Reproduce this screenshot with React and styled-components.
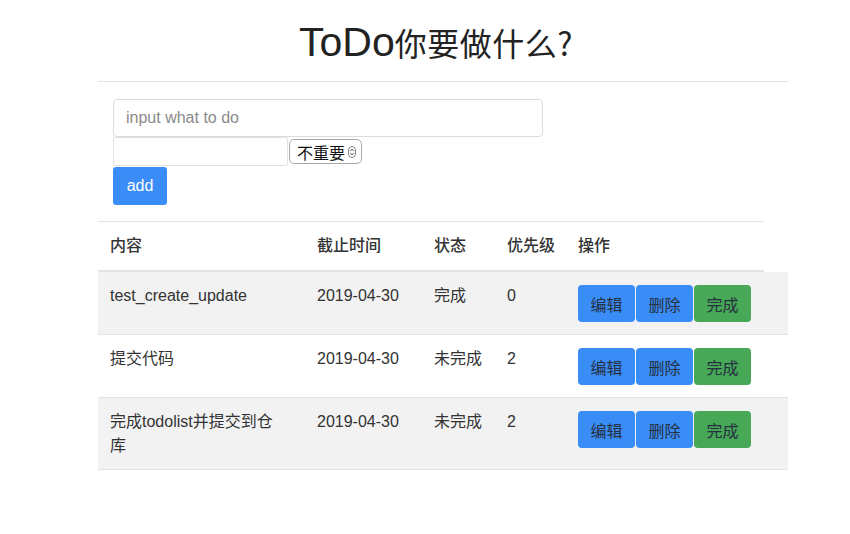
import React from 'react';
import styled, { createGlobalStyle } from 'styled-components';

const colors = {
    text: '#333',
    line: '#e3e3e3',
    stripe: '#f2f2f2',
    blue: '#3a8cf7',
    green: '#47a857',
};

const GlobalStyle = createGlobalStyle`
    body {
        margin: 0;
        background: #fff;
        font-family: "Liberation Sans", "Noto Sans CJK SC", sans-serif;
        color: ${colors.text};
    }
`

const Page = styled.div`
    width: 690px;
    margin-left: 98px;
    display: flex;
    flex-direction: column;
`

const Header = styled.div`
    height: 81px;
    border-bottom: 1px solid ${colors.line};
    display: flex;
    justify-content: center;
    align-items: flex-start;
`

const Title = styled.h1`
    margin: 17px 0 0 -14px;
    font-size: 41px;
    font-weight: normal;
    line-height: 50px;
    color: #222;
`

const TitleCjk = styled.span`
    font-size: 32px;
    font-family: "Noto Sans CJK SC", sans-serif;
    letter-spacing: 0.5px;
`

const Form = styled.div`
    padding: 17px 0 0 15px;
    display: flex;
    flex-direction: column;
    align-items: flex-start;
`

const TextInput = styled.input`
    box-sizing: border-box;
    width: 430px;
    height: 38px;
    padding: 0 12px;
    border: 1px solid #dcdcdc;
    border-radius: 4px;
    font-family: "Liberation Sans", sans-serif;
    font-size: 16px;
    outline: none;
    &::placeholder {
        color: #8a8a8a;
    }
`

const Row = styled.div`
    display: flex;
    align-items: center;
`

const DateInput = styled.input`
    box-sizing: border-box;
    width: 175px;
    height: 29px;
    border: 1px solid #e2e2e2;
    border-radius: 2px;
    outline: none;
`

const SelectBox = styled.div`
    box-sizing: border-box;
    width: 73px;
    height: 25px;
    margin-left: 1px;
    padding: 0 5px 0 7px;
    border: 1px solid #a9a9a9;
    border-radius: 5px;
    display: flex;
    align-items: center;
    justify-content: space-between;
    font-family: "Noto Sans CJK SC", sans-serif;
    font-size: 16px;
    color: #111;
`

const AddButton = styled.button`
    box-sizing: border-box;
    width: 54px;
    height: 38px;
    margin-top: 1px;
    border: none;
    border-radius: 3px;
    background: ${colors.blue};
    color: #fff;
    font-family: "Liberation Sans", sans-serif;
    font-size: 16px;
`

const Table = styled.div`
    margin-top: 16px;
    display: flex;
    flex-direction: column;
`

const Cols = '207px 117px 73px 71px 1fr';

const HeadRow = styled.div`
    width: 666px;
    display: grid;
    grid-template-columns: ${Cols};
    border-top: 1px solid ${colors.line};
    border-bottom: 2px solid ${colors.line};
`

const BodyRow = styled.div`
    display: grid;
    grid-template-columns: ${Cols};
    border-bottom: 1px solid ${colors.line};
    background: ${p => (p.$striped ? colors.stripe : '#fff')};
`

const Th = styled.div`
    padding: 12px;
    font-size: 16px;
    line-height: 24px;
    font-weight: 500;
    white-space: nowrap;
`

const Td = styled.div`
    padding: 12px ${p => (p.$wrap ? '28px' : '12px')} 11px 12px;
    font-size: 16px;
    line-height: 24px;
`

const Actions = styled.div`
    padding: 13px 12px 12px;
    display: flex;
    gap: 1px;
    align-items: flex-start;
`

const ActionButton = styled.button`
    box-sizing: border-box;
    width: 57px;
    height: 37px;
    border: none;
    border-radius: 4px;
    background: ${p => (p.$green ? colors.green : colors.blue)};
    color: #263040;
    font-family: "Noto Sans CJK SC", sans-serif;
    font-size: 16px;
    padding: 0;
`

const SelectArrows = () => (
    <svg width="8" height="12" viewBox="0 0 8 12">
        <rect x="0.5" y="0.5" width="7" height="11" rx="3.5" fill="none" stroke="#888" />
        <path d="M2.2 5 L4 3 L5.8 5 M2.2 7 L4 9 L5.8 7" fill="none" stroke="#555" strokeWidth="0.9" />
    </svg>
);

const todos = [
    { content: 'test_create_update', date: '2019-04-30', status: '完成', priority: '0' },
    { content: '提交代码', date: '2019-04-30', status: '未完成', priority: '2' },
    { content: '完成todolist并提交到仓库', date: '2019-04-30', status: '未完成', priority: '2' },
];

const App = () => {
    return (
        <Page>
            <GlobalStyle />
            <Header>
                <Title>ToDo<TitleCjk>你要做什么?</TitleCjk></Title>
            </Header>
            <Form>
                <TextInput placeholder="input what to do" />
                <Row>
                    <DateInput />
                    <SelectBox>
                        不重要
                        <SelectArrows />
                    </SelectBox>
                </Row>
                <AddButton>add</AddButton>
            </Form>
            <Table>
                <HeadRow>
                    <Th>内容</Th>
                    <Th>截止时间</Th>
                    <Th>状态</Th>
                    <Th>优先级</Th>
                    <Th>操作</Th>
                </HeadRow>
                {todos.map((t, i) => (
                    <BodyRow key={i} $striped={i % 2 === 0}>
                        <Td $wrap>{t.content}</Td>
                        <Td>{t.date}</Td>
                        <Td>{t.status}</Td>
                        <Td>{t.priority}</Td>
                        <Actions>
                            <ActionButton>编辑</ActionButton>
                            <ActionButton>删除</ActionButton>
                            <ActionButton $green>完成</ActionButton>
                        </Actions>
                    </BodyRow>
                ))}
            </Table>
        </Page>
    )
}

export default App;
